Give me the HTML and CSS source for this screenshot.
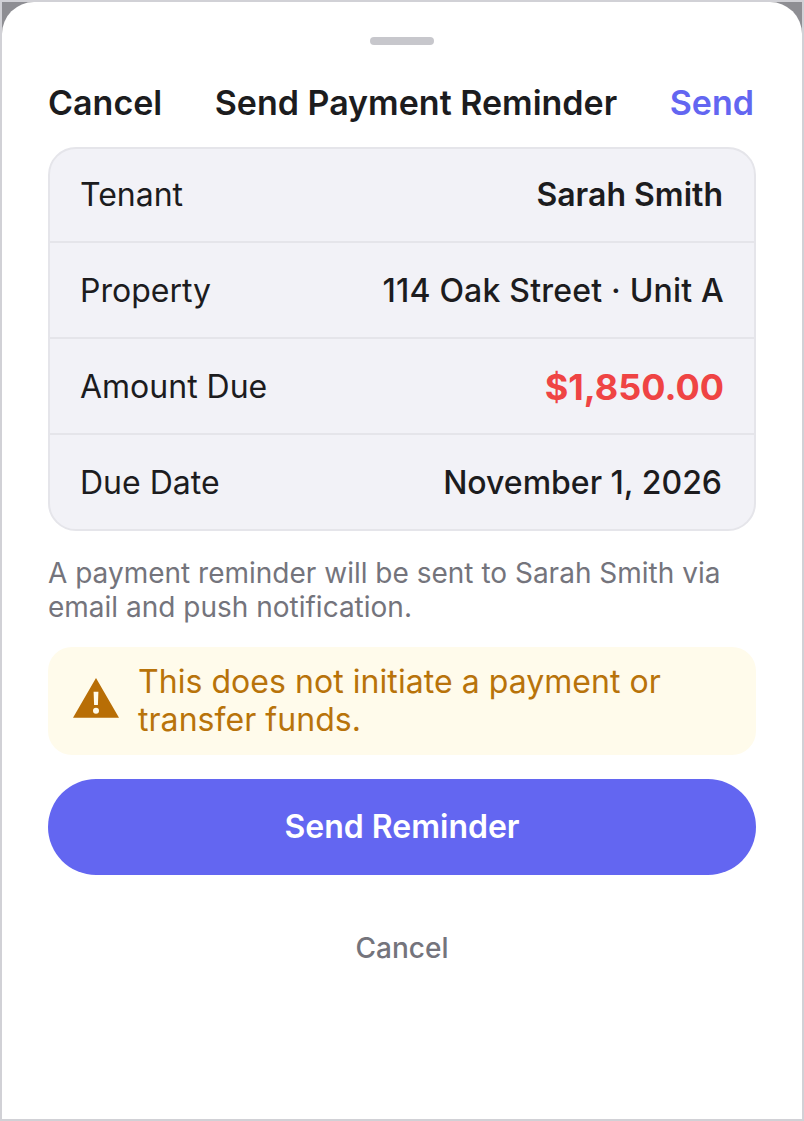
FILE: index.html
```html
<!DOCTYPE html>
<html lang="en">
<head>
  <meta charset="UTF-8">
  <meta name="viewport" content="width=device-width, initial-scale=1">
  <title>Send Payment Reminder</title>
  <link rel="stylesheet" href="styles.css">
</head>
<body>
  <div class="frame">
    <div class="sheet">
      <div class="handle"></div>

      <div class="nav">
        <span class="nav-cancel">Cancel</span>
        <span class="nav-title">Send Payment Reminder</span>
        <span class="nav-send">Send</span>
      </div>

      <div class="card">
        <div class="row">
          <span class="label">Tenant</span>
          <span class="value value-strong">Sarah Smith</span>
        </div>
        <div class="row">
          <span class="label">Property</span>
          <span class="value value-wide">114 Oak Street · Unit A</span>
        </div>
        <div class="row">
          <span class="label">Amount Due</span>
          <span class="value value-amount">$1,850.00</span>
        </div>
        <div class="row">
          <span class="label">Due Date</span>
          <span class="value value-date">November 1, 2026</span>
        </div>
      </div>

      <p class="note">A payment reminder will be sent to Sarah Smith via email and push notification.</p>

      <div class="warning">
        <svg class="warning-icon" viewBox="0 0 46 40" width="46" height="40" aria-hidden="true">
          <path fill="#b86e06" fill-rule="evenodd" d="M23 0 46 39.7H0ZM20.6 13.7h4.8l-.5 13.3h-3.8ZM23 29.7a3 3 0 1 0 0 6 3 3 0 0 0 0-6Z"/>
        </svg>
        <span class="warning-text">This does not initiate a payment or transfer funds.</span>
      </div>

      <div class="btn-primary">Send Reminder</div>
      <div class="btn-cancel">Cancel</div>
    </div>
  </div>
</body>
</html>
```

FILE: styles.css
```css
html, body {
  margin: 0;
  padding: 0;
  width: 100%;
  height: 100%;
  overflow: hidden;
}

body {
  font-family: "Inter", "Liberation Sans", sans-serif;
  color: #1c1c1e;
}

/* Outer device frame with the dim backdrop showing at the corners */
.frame {
  box-sizing: border-box;
  width: 804px;
  height: 1121px;
  background: #8e8e93;
  border: 2px solid #d1d1d6;
}

.sheet {
  box-sizing: border-box;
  height: 100%;
  padding: 35px 46px 0;
  background: #fff;
  border-radius: 32px 32px 0 0;
  display: flex;
  flex-direction: column;
}

.handle {
  width: 64px;
  height: 8px;
  border-radius: 4px;
  background: #c7c7cc;
  align-self: center;
}

/* Nav */
.nav {
  display: flex;
  justify-content: space-between;
  align-items: center;
  height: 44px;
  margin-top: 36px;
  padding-right: 2px;
  font-size: 34px;
  line-height: 44px;
  font-weight: 600;
}

.nav-send { color: #6366f1; }

/* Detail card */
.card {
  margin-top: 22px;
  background: #f2f2f7;
  border: 2px solid #e5e5ea;
  border-radius: 28px;
}

.row {
  box-sizing: border-box;
  height: 96px;
  padding: 0 30px;
  display: flex;
  justify-content: space-between;
  align-items: center;
  border-bottom: 2px solid #e5e5ea;
  font-size: 32px;
}

.row:first-child {
  height: 94px;
  padding-bottom: 1px;
}

.row:last-child {
  border-bottom: 0;
  height: 94px;
}

.label { font-weight: 400; }
.value { font-weight: 500; }
.value-strong { font-weight: 600; margin-right: 1px; }
.value-wide { letter-spacing: 0.2px; }
.value-date { margin-right: 2px; }
.value-amount { font-weight: 700; font-size: 36px; color: #ef4444; margin-top: 2px; }

.note {
  margin: 25px 0 0;
  font-size: 28px;
  line-height: 34px;
  color: #74747c;
}

/* Warning box */
.warning {
  margin-top: 23px;
  height: 108px;
  box-sizing: border-box;
  padding: 0 24px 0 25px;
  display: flex;
  align-items: center;
  gap: 19px;
  background: #fffbeb;
  border-radius: 24px;
}

.warning-icon {
  flex: none;
  margin-bottom: 6px;
}

.warning-text {
  font-size: 32px;
  line-height: 38px;
  letter-spacing: 0.05px;
  color: #b8730a;
}

/* Buttons */
.btn-primary {
  box-sizing: border-box;
  margin-top: 24px;
  height: 96px;
  padding-bottom: 2px;
  border-radius: 48px;
  background: #6366f1;
  color: #fff;
  font-size: 32px;
  font-weight: 600;
  display: flex;
  align-items: center;
  justify-content: center;
}

.btn-cancel {
  margin-top: 24px;
  height: 98px;
  display: flex;
  align-items: center;
  justify-content: center;
  font-size: 28px;
  font-weight: 500;
  color: #74747c;
}
```
